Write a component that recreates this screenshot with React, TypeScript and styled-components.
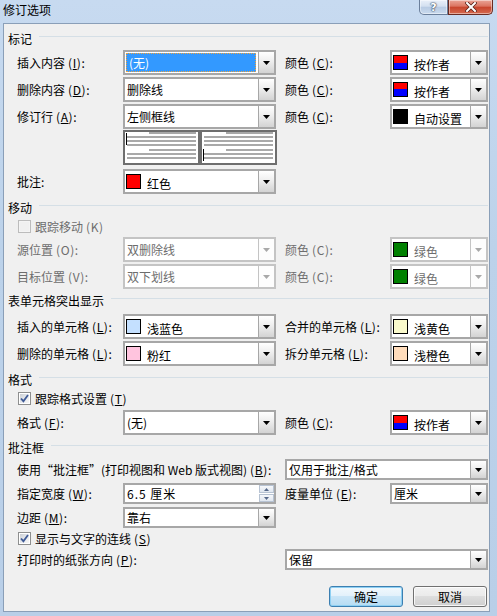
import React from "react";
import styled, { createGlobalStyle } from "styled-components";

const Global = createGlobalStyle`
  html, body { margin: 0; padding: 0; }
  body {
    width: 497px;
    height: 616px;
    overflow: hidden;
    font-family: "Noto Sans CJK SC", "Noto Sans", sans-serif;
    font-size: 12px;
    color: #000;
    background: #bfd4ec;
  }
`;

/* ---------- window chrome ---------- */

const Window = styled.div`
  width: 497px;
  height: 616px;
  display: flex;
  flex-direction: column;
  background: linear-gradient(180deg, #c7daf0 0%, #bcd2ea 40%, #b9cfe8 100%);
`;

const TitleBar = styled.div`
  height: 23px;
  display: flex;
  align-items: flex-start;
  flex: none;
`;

const Title = styled.div`
  padding-left: 3px;
  line-height: 20px;
  font-size: 12px;
  color: #000;
`;

const Controls = styled.div`
  margin-left: auto;
  margin-right: 4px;
  display: flex;
`;

const CaptionButton = styled.div<{ $kind: "help" | "close" }>`
  height: 15px;
  width: ${(p) => (p.$kind === "help" ? 29 : 45)}px;
  box-sizing: border-box;
  border: 1px solid ${(p) => (p.$kind === "help" ? "#6b7f9b" : "#6a2b22")};
  border-top: none;
  border-radius: ${(p) => (p.$kind === "help" ? "0 0 0 5px" : "0 0 5px 0")};
  background: ${(p) =>
    p.$kind === "help"
      ? "linear-gradient(180deg, #e9f0f9 0%, #d3e0f0 45%, #b8cbe3 50%, #c9daee 100%)"
      : "linear-gradient(180deg, #eaa597 0%, #db7460 45%, #c8442c 50%, #d46a4f 100%)"};
  box-shadow: inset 0 0 0 1px rgba(255, 255, 255, 0.45);
  display: flex;
  align-items: center;
  justify-content: center;
`;

const HelpGlyph = styled.span`
  font-family: "DejaVu Sans", sans-serif;
  font-weight: bold;
  font-size: 11px;
  line-height: 11px;
  color: #fff;
  text-shadow: 0 0 1px #3b4a60, 0 0 1px #3b4a60, 0 0 2px #3b4a60;
`;

const CloseGlyph = () => (
  <svg width="12" height="10" viewBox="0 0 12 10">
    <path d="M2 1 L10 9 M10 1 L2 9" stroke="#5a2219" strokeWidth="3.6" strokeLinecap="square" />
    <path d="M2 1 L10 9 M10 1 L2 9" stroke="#fff" strokeWidth="2" strokeLinecap="square" />
  </svg>
);

/* ---------- dialog body ---------- */

const Body = styled.div`
  flex: 1;
  margin: 0 7px 5px 3px;
  background: #f0f0f0;
  border: 1px solid #8a9fb8;
  padding: 6px 0 4px 4px;
  display: flex;
  flex-direction: column;
`;

const Legend = styled.div<{ $mt: number }>`
  margin-top: ${(p) => p.$mt}px;
  height: 16px;
  display: flex;
  align-items: center;
  margin-right: 1px;
  white-space: nowrap;
  &::after {
    content: "";
    flex: 1;
    height: 0;
    border-top: 1px solid #d5dfe6;
    margin-left: 7px;
    margin-top: -3px;
  }
`;

const FieldRow = styled.div<{ $mt: number; $h?: number; $wide?: boolean }>`
  margin-top: ${(p) => p.$mt}px;
  height: ${(p) => p.$h ?? 22}px;
  padding-left: 9px;
  display: grid;
  grid-template-columns: ${(p) => (p.$wide ? "268px 203px" : "106px 153px 114px 98px")};
  align-items: stretch;
`;

const Label = styled.div<{ $disabled?: boolean; $second?: boolean }>`
  display: flex;
  align-items: center;
  white-space: nowrap;
  padding-left: ${(p) => (p.$second ? 9 : 0)}px;
  color: ${(p) => (p.$disabled ? "#6d6d6d" : "#000")};
`;

/* access-key hint such as "(I):" — set a little apart from the caption */
const Hint = styled.span`
  margin-left: 3px;
  letter-spacing: 0.6px;
`;

const Key = styled.span`
  text-decoration: underline;
  text-underline-offset: 1px;
`;

const PreviewRow = styled.div`
  margin-top: 4px;
  height: 35px;
  padding-left: 115px;
  display: flex;
`;

/* ---------- combo box ---------- */

const ComboFrame = styled.div<{ $disabled?: boolean }>`
  box-sizing: border-box;
  height: 100%;
  border: 2px solid ${(p) => (p.$disabled ? "#c4c4c4" : "#a7a7a7")};
  background: #fff;
  display: flex;
  align-items: stretch;
  min-width: 0;
`;

const ComboValue = styled.div<{ $disabled?: boolean }>`
  flex: 1;
  min-width: 0;
  display: flex;
  align-items: center;
  padding-left: 2px;
  white-space: nowrap;
  color: ${(p) => (p.$disabled ? "#6d6d6d" : "#000")};
`;

const Selection = styled.div`
  flex: 1;
  align-self: stretch;
  margin: 1px 2px 1px -1px;
  padding-left: 2px;
  background: #3399ff;
  color: #fff;
  border: 1px dotted #f2a33a;
  display: flex;
  align-items: center;
`;

const ColourText = styled.span`
  margin-left: 6px;
  padding-top: 4px;
`;

const Swatch = styled.span<{ $fill: string; $lower?: string }>`
  flex: none;
  width: 15px;
  height: 15px;
  box-sizing: border-box;
  margin-left: -1px;
  border: 1px solid #000;
  background: ${(p) =>
    p.$lower ? `linear-gradient(${p.$fill} 50%, ${p.$lower} 50%)` : p.$fill};
`;

const DropButton = styled.div<{ $disabled?: boolean }>`
  flex: none;
  width: 16px;
  box-sizing: border-box;
  border-left: 1px solid ${(p) => (p.$disabled ? "#c4c4c4" : "#a7a7a7")};
  background: ${(p) =>
    p.$disabled ? "#fdfdfd" : "linear-gradient(180deg, #ffffff 0%, #eeeeee 45%, #d3d3d3 100%)"};
  display: flex;
  align-items: center;
  justify-content: center;
`;

const Arrow = ({ color }: { color: string }) => (
  <svg width="7" height="4" viewBox="0 0 7 4">
    <polygon points="0,0 7,0 3.5,4" fill={color} />
  </svg>
);

type ComboProps = {
  value: string;
  disabled?: boolean;
  selected?: boolean;
  fill?: string;
  lower?: string;
};

const Combo = ({ value, disabled, selected, fill, lower }: ComboProps) => (
  <ComboFrame $disabled={disabled}>
    <ComboValue $disabled={disabled}>
      {selected ? (
        <Selection>{value}</Selection>
      ) : fill ? (
        <>
          <Swatch $fill={fill} $lower={lower} />
          <ColourText>{value}</ColourText>
        </>
      ) : (
        value
      )}
    </ComboValue>
    <DropButton $disabled={disabled}>
      <Arrow color={disabled ? "#a8a8a8" : "#000"} />
    </DropButton>
  </ComboFrame>
);

/* ---------- spin box ---------- */

const SpinFrame = styled(ComboFrame)``;

const SpinValue = styled(ComboValue)`
  letter-spacing: 1px;
`;

const SpinButtons = styled.div`
  flex: none;
  width: 15px;
  display: flex;
  flex-direction: column;
  gap: 1px;
  padding: 0 0 0 1px;
`;

const SpinHalf = styled.div`
  flex: 1;
  box-sizing: border-box;
  border: 1px solid #b7c3d3;
  background: linear-gradient(180deg, #f6f8fb 0%, #dfe6ef 100%);
  display: flex;
  align-items: center;
  justify-content: center;
`;

const SpinArrow = ({ up }: { up?: boolean }) => (
  <svg width="5" height="3" viewBox="0 0 5 3">
    <polygon points={up ? "0,3 5,3 2.5,0" : "0,0 5,0 2.5,3"} fill="#56698a" />
  </svg>
);

/* ---------- check box ---------- */

const CheckRow = styled.div<{ $mt: number; $disabled?: boolean }>`
  margin-top: ${(p) => p.$mt}px;
  height: 14px;
  padding-left: 10px;
  display: flex;
  align-items: center;
  gap: 4px;
  white-space: nowrap;
  color: ${(p) => (p.$disabled ? "#6d6d6d" : "#000")};
`;

const CheckBox = styled.span<{ $disabled?: boolean }>`
  width: 13px;
  height: 13px;
  box-sizing: border-box;
  border: 1px solid ${(p) => (p.$disabled ? "#bcbcbc" : "#8e8f8f")};
  background: ${(p) => (p.$disabled ? "#f4f4f4" : "#fff")};
  padding: 1px;
  display: flex;
  flex: none;
`;

const CheckInner = styled.span<{ $disabled?: boolean }>`
  flex: 1;
  background: ${(p) =>
    p.$disabled ? "#f0f0f0" : "linear-gradient(135deg, #cbcfd5 0%, #e9ebee 55%, #f6f6f6 100%)"};
  display: flex;
  align-items: center;
  justify-content: center;
`;

const Check = ({ checked, disabled }: { checked?: boolean; disabled?: boolean }) => (
  <CheckBox $disabled={disabled}>
    <CheckInner $disabled={disabled}>
      {checked && (
        <svg width="9" height="9" viewBox="0 0 9 9">
          <path d="M1 4.5 L3.4 7.2 L8 1" stroke="#3f5a96" strokeWidth="1.8" fill="none" />
        </svg>
      )}
    </CheckInner>
  </CheckBox>
);

/* ---------- change-bar preview ---------- */

const Preview = () => {
  const panel = (ox: number, barTop: number) => {
    const full = [6, 10, 14, 23, 27];
    const short = [2, 19];
    return (
      <g key={ox}>
        <rect x={ox + 1} y={1} width={75} height={33} fill="#fff" stroke="#6e6e6e" strokeWidth={2} />
        {short.map((y) => (
          <rect key={"s" + y} x={ox + 26} y={y} width={47} height={2} fill="#a9a9a9" />
        ))}
        {full.map((y) => (
          <rect key={"f" + y} x={ox + 4} y={y} width={69} height={2} fill="#a9a9a9" />
        ))}
        <rect x={ox + 3} y={barTop} width={1} height={12} fill="#000" />
      </g>
    );
  };
  return (
    <svg width="154" height="35" viewBox="0 0 154 35">
      {panel(0, 3)}
      {panel(77, 19)}
    </svg>
  );
};

/* ---------- buttons ---------- */

const ButtonBar = styled.div`
  margin-top: 16px;
  height: 21px;
  padding-right: 2px;
  display: flex;
  justify-content: flex-end;
  gap: 10px;
`;

const PushButton = styled.div<{ $default?: boolean }>`
  width: 74px;
  box-sizing: border-box;
  border: 1px solid ${(p) => (p.$default ? "#3c7fb1" : "#707070")};
  border-radius: 3px;
  background: ${(p) =>
    p.$default
      ? "linear-gradient(180deg, #f2f9fd 0%, #e3f1fb 45%, #c9e5f7 50%, #b6dcf3 100%)"
      : "linear-gradient(180deg, #f2f2f2 0%, #ebebeb 45%, #dddddd 50%, #cfcfcf 100%)"};
  box-shadow: ${(p) =>
    p.$default ? "inset 0 0 0 1px #8ed0f3" : "inset 0 0 0 1px rgba(255,255,255,0.8)"};
  display: flex;
  align-items: center;
  justify-content: center;
`;

/* ---------- page ---------- */

const BYAUTHOR = { fill: "#ff0000", lower: "#0000ff" };

const K = ({ k, plain }: { k: string; plain?: boolean }) => (
  <Hint>({plain ? k : <Key>{k}</Key>})</Hint>
);

export default function App() {
  return (
    <>
      <Global />
      <Window>
        <TitleBar>
          <Title>修订选项</Title>
          <Controls>
            <CaptionButton $kind="help">
              <HelpGlyph>?</HelpGlyph>
            </CaptionButton>
            <CaptionButton $kind="close">
              <CloseGlyph />
            </CaptionButton>
          </Controls>
        </TitleBar>

        <Body>
          <Legend $mt={0}>标记</Legend>
          <FieldRow $mt={4}>
            <Label>插入内容<K k="I" />:</Label>
            <Combo value="(无)" selected />
            <Label $second>颜色<K k="C" />:</Label>
            <Combo value="按作者" {...BYAUTHOR} />
          </FieldRow>
          <FieldRow $mt={5}>
            <Label>删除内容<K k="D" />:</Label>
            <Combo value="删除线" />
            <Label $second>颜色<K k="C" />:</Label>
            <Combo value="按作者" {...BYAUTHOR} />
          </FieldRow>
          <FieldRow $mt={5}>
            <Label>修订行<K k="A" />:</Label>
            <Combo value="左侧框线" />
            <Label $second>颜色<K k="C" />:</Label>
            <Combo value="自动设置" fill="#000000" />
          </FieldRow>
          <PreviewRow>
            <Preview />
          </PreviewRow>
          <FieldRow $mt={4} $h={23}>
            <Label>批注:</Label>
            <Combo value="红色" fill="#ff0000" />
          </FieldRow>

          <Legend $mt={7}>移动</Legend>
          <CheckRow $mt={4} $disabled>
            <Check disabled />
            <span>跟踪移动<K k="K" plain /></span>
          </CheckRow>
          <FieldRow $mt={4}>
            <Label $disabled>源位置<K k="O" plain />:</Label>
            <Combo value="双删除线" disabled />
            <Label $second $disabled>颜色<K k="C" plain />:</Label>
            <Combo value="绿色" fill="#008000" disabled />
          </FieldRow>
          <FieldRow $mt={5}>
            <Label $disabled>目标位置<K k="V" plain />:</Label>
            <Combo value="双下划线" disabled />
            <Label $second $disabled>颜色<K k="C" plain />:</Label>
            <Combo value="绿色" fill="#008000" disabled />
          </FieldRow>

          <Legend $mt={6}>表单元格突出显示</Legend>
          <FieldRow $mt={6}>
            <Label>插入的单元格<K k="L" />:</Label>
            <Combo value="浅蓝色" fill="#c4e0ff" />
            <Label $second>合并的单元格<K k="L" />:</Label>
            <Combo value="浅黄色" fill="#fafacc" />
          </FieldRow>
          <FieldRow $mt={5}>
            <Label>删除的单元格<K k="L" />:</Label>
            <Combo value="粉红" fill="#ffc4de" />
            <Label $second>拆分单元格<K k="L" />:</Label>
            <Combo value="浅橙色" fill="#ffdcbb" />
          </FieldRow>

          <Legend $mt={8}>格式</Legend>
          <CheckRow $mt={4}>
            <Check checked />
            <span>跟踪格式设置<K k="T" /></span>
          </CheckRow>
          <FieldRow $mt={5}>
            <Label>格式<K k="F" />:</Label>
            <Combo value="(无)" />
            <Label $second>颜色<K k="C" />:</Label>
            <Combo value="按作者" {...BYAUTHOR} />
          </FieldRow>

          <Legend $mt={7}>批注框</Legend>
          <FieldRow $mt={4} $h={21} $wide>
            <Label>使用“批注框”(打印视图和 Web 版式视图)<K k="B" />:</Label>
            <Combo value="仅用于批注/格式" />
          </FieldRow>
          <FieldRow $mt={3} $h={21}>
            <Label>指定宽度<K k="W" />:</Label>
            <SpinFrame>
              <SpinValue>6.5 厘米</SpinValue>
              <SpinButtons>
                <SpinHalf>
                  <SpinArrow up />
                </SpinHalf>
                <SpinHalf>
                  <SpinArrow />
                </SpinHalf>
              </SpinButtons>
            </SpinFrame>
            <Label $second>度量单位<K k="E" />:</Label>
            <Combo value="厘米" />
          </FieldRow>
          <FieldRow $mt={3} $h={21}>
            <Label>边距<K k="M" />:</Label>
            <Combo value="靠右" />
          </FieldRow>
          <CheckRow $mt={3}>
            <Check checked />
            <span>显示与文字的连线<K k="S" /></span>
          </CheckRow>
          <FieldRow $mt={4} $h={21} $wide>
            <Label>打印时的纸张方向<K k="P" />:</Label>
            <Combo value="保留" />
          </FieldRow>

          <ButtonBar>
            <PushButton $default>确定</PushButton>
            <PushButton>取消</PushButton>
          </ButtonBar>
        </Body>
      </Window>
    </>
  );
}
